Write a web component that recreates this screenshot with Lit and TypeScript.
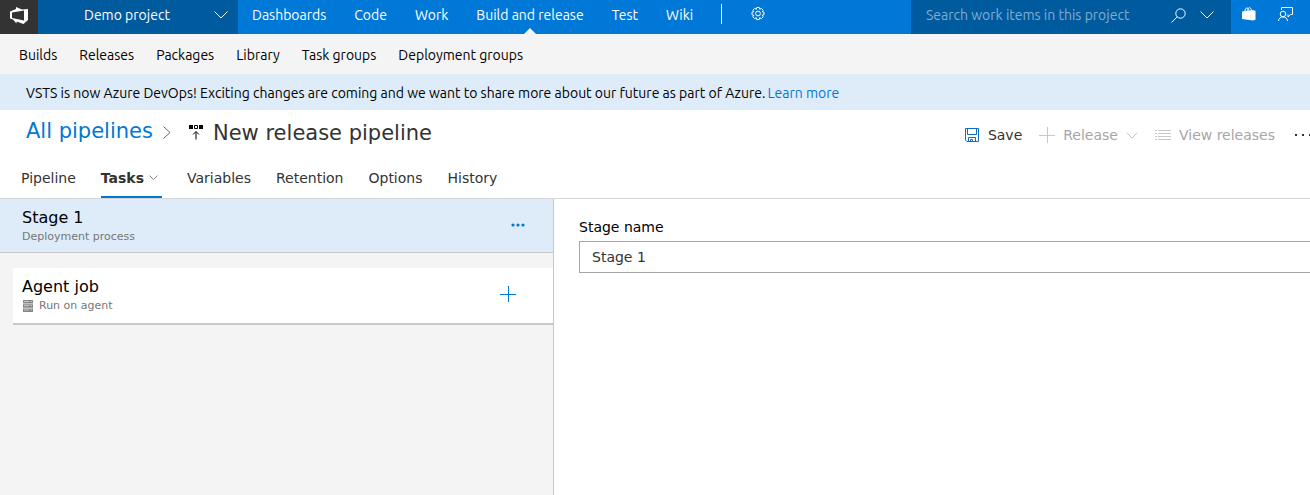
import { LitElement, html, css } from "lit";
import { customElement } from "lit/decorators.js";

const chevron = html`<svg viewBox="0 0 14 8" width="14" height="8" aria-hidden="true"><path d="M.5.5 7 7 13.5.5" fill="none" stroke="currentColor"/></svg>`;
const menuChevron = html`<svg viewBox="0 0 12 7" width="12" height="7" aria-hidden="true"><path d="M.5.5 6 6 11.500.5" fill="none" stroke="currentColor"/></svg>`;
const smallChevron = html`<svg viewBox="0 0 9 6" width="9" height="6" aria-hidden="true"><path d="M.5.500 4.500 4.500 8.500.5" fill="none" stroke="currentColor"/></svg>`;
const plus = html`<svg viewBox="0 0 16 16" width="16" height="16" aria-hidden="true"><path d="M8.5 0v16M0 8.5h16" fill="none" stroke="currentColor"/></svg>`;

@customElement("app-root")
export class AppRoot extends LitElement {
  static styles = css`
    :host { display: flex; flex-direction: column; min-height: 100vh; overflow-x: hidden; background: #fff; color: #333; font: 14px/20px "DejaVu Sans", sans-serif; }
    * { box-sizing: border-box; }
    a { color: inherit; text-decoration: none; }
    button { font: inherit; color: inherit; background: none; border: 0; padding: 0; display: flex; align-items: center; }
    svg { display: block; flex: none; }
    .top, .hub, .banner { font: 14px/20px "Ubuntu", "Noto Sans", sans-serif; display: flex; align-items: center; white-space: nowrap; }
    .top { height: 34px; background: #0078d7; color: #fff; }
    .logo { width: 38px; align-self: stretch; background: #333; display: flex; align-items: center; justify-content: center; padding-bottom: 4px; }
    .project { width: 200px; align-self: stretch; background: #005a9e; padding: 0 10px 4px 46px; justify-content: space-between; }
    .areas { display: flex; align-self: stretch; gap: 28px; padding-left: 14px; }
    .areas a { display: flex; align-items: center; position: relative; padding-bottom: 4px; }
    .areas .active::after { content: ""; position: absolute; bottom: 0; left: calc(50% - 6px); border: 6px solid transparent; border-top: 0; border-bottom-color: #f4f4f4; }
    .sep { width: 1px; height: 20px; background: #fff; margin: 0 28px 6px; }
    .gear { margin-bottom: 6px; }
    .search { margin-left: auto; width: 320px; align-self: stretch; background: #005a9e; display: flex; align-items: center; padding: 0 17px 4px 15px; gap: 14px; }
    .search input { flex: 1; min-width: 0; font: inherit; color: #fff; background: none; border: 0; padding: 0; outline: 0; }
    .search input::placeholder { color: #80adcf; opacity: 1; }
    .tray { display: flex; gap: 22px; padding: 0 17px 6px 11px; }
    .hub { height: 40px; background: #f4f4f4; color: #000; gap: 22px; padding: 2px 19px 0; }
    .banner { height: 36px; background: #deecf9; color: #000; gap: 2px; padding: 2px 26px 0; }
    .banner a { color: #0078d7; }
    .title { display: flex; align-items: center; height: 44px; padding-left: 26px; font-size: 21px; line-height: 28px; white-space: nowrap; }
    .title a { color: #0078d7; padding-bottom: 2px; }
    .title h1 { font: inherit; margin: 0 auto 0 10px; padding-top: 2px; }
    .crumb { margin: 0 18px 0 10px; color: #666; }
    .actions { display: flex; gap: 17px; font-size: 14px; color: #333; line-height: 20px; margin-top: 6px; }
    .actions button { gap: 8px; }
    .actions button:disabled { color: #a6a6a6; }
    .actions .more { width: 15px; overflow: hidden; margin-left: 3px; }
    .faint { color: #c8c8c8; }
    .save { color: #106ebe; }
    .tabs { display: flex; height: 45px; gap: 25px; padding: 6px 0 0 21px; border-bottom: 1px solid #d6d6d6; }
    .tabs a { display: flex; align-items: center; gap: 5px; border-bottom: 2px solid transparent; }
    .tabs .active { font-weight: bold; border-color: #0078d7; padding-right: 4px; }
    .tabs svg { color: #888; }
    .body { display: flex; flex: 1; }
    .list { width: 554px; flex: none; background: #f4f4f4; border-right: 1px solid #c8c8c8; }
    .row { display: flex; align-items: center; justify-content: space-between; color: #0078d7; }
    .row button { padding-bottom: 4px; }
    .stage { height: 54px; padding: 2px 28px 0 22px; background: #deecf9; border-bottom: 1px solid #c8c8c8; }
    .job { height: 57px; margin: 15px 0 0 13px; padding: 0 37px 0 9px; background: #fff; border-bottom: 2px solid #c8c8c8; }
    .name { font-size: 16px; line-height: 20px; color: #000; }
    .sub { display: flex; align-items: center; gap: 6px; font-size: 11px; line-height: 18px; color: #767676; }
    .form { flex: 1; min-width: 0; padding: 18px 0 0 25px; color: #000; }
    .form label { display: block; margin-bottom: 4px; }
    .form input { display: block; width: calc(100% + 1px); height: 32px; font: inherit; color: #333; border: 1px solid #a6a6a6; border-radius: 0; padding: 0 12px; background: #fff; }
  `;

  render() {
    return html`
      <header class="top">
        <a class="logo" href="#" aria-label="Home"><svg viewBox="0 0 18 17" width="18" height="17"><path fill-rule="evenodd" d="M0 4.500 6 2V0l6 2.500L18 2v11l-4.500 4-7-2.500v2L3 12.500l-3-1zM2 5.500V11l12 2.500v-10z" fill="#fff"/></svg></a>
        <button class="project">Demo project ${chevron}</button>
        <nav class="areas">
          <a href="#">Dashboards</a><a href="#">Code</a><a href="#">Work</a><a class="active" href="#">Build and release</a><a href="#">Test</a><a href="#">Wiki</a>
        </nav>
        <span class="sep"></span>
        <button class="gear" aria-label="Settings"><svg viewBox="0 0 16 16" width="16" height="16" fill="none" stroke="#fff"><path d="M6.700 1h2.600l.4 1.800 1.600-1 1.900 1.900-1 1.600 1.800.4v2.600l-1.800.4 1 1.600-1.900 1.900-1.600-1-.4 1.800H6.700l-.4-1.800-1.600 1-1.900-1.900 1-1.600L2 8.300V5.700l1.800-.4-1-1.600 1.900-1.900 1.600 1z" transform="translate(0 .5)"/><circle cx="8" cy="7.500" r="2.400"/></svg></button>
        <div class="search">
          <input aria-label="Search" placeholder="Search work items in this project">
          <button aria-label="Run search"><svg viewBox="0 0 15 15" width="15" height="15" fill="none" stroke="#fff"><circle cx="9.500" cy="5.500" r="4.700"/><path d="M6.200 8.800.5 14.500"/></svg></button>
          <button aria-label="Search scope">${chevron}</button>
        </div>
        <div class="tray">
          <button aria-label="Marketplace"><svg viewBox="0 0 14 14" width="14" height="14"><path d="M0 4.500 10 3l3.500.7v9L11 13.500 0 12z" fill="#fff"/><path d="M3 4.500C3 0 6 0 7 3.500M5.500 3.500C6-.2 9-.2 9.500 3.500" fill="none" stroke="#fff"/></svg></button>
          <button aria-label="Feedback"><svg viewBox="0 0 15 15" width="15" height="15" fill="none" stroke="#fff"><path d="M3.500 3V.5h11v7h-2l-2.500 2.500V7.500"/><circle cx="5" cy="7" r="2.800"/><path d="M.5 14c.3-5.500 8.700-5.500 9 0"/></svg></button>
        </div>
      </header>
      <nav class="hub"><a href="#">Builds</a><a href="#">Releases</a><a href="#">Packages</a><a href="#">Library</a><a href="#">Task groups</a><a href="#">Deployment groups</a></nav>
      <div class="banner"><span>VSTS is now Azure DevOps! Exciting changes are coming and we want to share more about our future as part of Azure.</span><a href="#">Learn more</a></div>
      <div class="title">
        <a href="#">All pipelines</a>
        <svg class="crumb" viewBox="0 0 8 13" width="8" height="13"><path d="M.5.5 7 6.500.5 12.500" fill="none" stroke="currentColor"/></svg>
        <svg viewBox="0 0 14 15" width="14" height="15"><path d="M0 0h4v4H0zM10 0h4v4h-4z" fill="#000"/><path d="M5.500.5h3v3h-3zM7 14.500V7M4 9.500l3-3 3 3" fill="none" stroke="#000"/></svg>
        <h1>New release pipeline</h1>
        <div class="actions">
          <button><svg class="save" viewBox="0 0 15 14" width="15" height="14" fill="none" stroke="currentColor"><path d="M.5.5h13v13H2L.5 12zM2.500.5v6h9v-6M3.500 13.500v-4h7v4M5.500 13.500v-2h2v2"/></svg>Save</button>
          <button disabled><span class="faint">${plus}</span>Release <span class="faint">${menuChevron}</span></button>
          <button disabled><svg class="faint" viewBox="0 0 16 11" width="16" height="11" fill="none" stroke="currentColor"><path d="M0 .5h2M3 .5h13M0 3.500h2M3 3.500h13M0 6.500h2M3 6.500h13M0 9.500h2M3 9.500h13"/></svg>View releases</button>
          <button class="more" aria-label="More"><svg viewBox="0 0 16 4" width="16" height="4" fill="#333"><path d="M0 1h2v2H0zM7 1h2v2H7zM14 1h2v2h-2z"/></svg></button>
        </div>
      </div>
      <nav class="tabs"><a href="#">Pipeline</a><a class="active" href="#">Tasks ${smallChevron}</a><a href="#">Variables</a><a href="#">Retention</a><a href="#">Options</a><a href="#">History</a></nav>
      <main class="body">
        <section class="list">
          <div class="row stage"><div><div class="name">Stage 1</div><div class="sub">Deployment process</div></div>
            <button aria-label="Stage actions"><svg viewBox="0 0 14 4" width="14" height="4" fill="currentColor"><circle cx="2" cy="2" r="1.600"/><circle cx="7" cy="2" r="1.600"/><circle cx="12" cy="2" r="1.600"/></svg></button></div>
          <div class="row job"><div><div class="name">Agent job</div><div class="sub"><svg viewBox="0 0 11 12" width="11" height="12"><path d="M1 0h10v3.500H1zM1 4.200h10v3.500H1zM1 8.400h10V12H1z" fill="#858585"/><path d="M2 1.500h5M8.500 1.500h1.500M2 5.700h5M8.500 5.700h1.500M2 10h5M8.500 10h1.500" stroke="#ddd" stroke-width=".8"/></svg>Run on agent</div></div>
            <button aria-label="Add task">${plus}</button></div>
        </section>
        <section class="form"><label for="stage">Stage name</label><input id="stage" value="Stage 1"></section>
      </main>`;
  }
}
